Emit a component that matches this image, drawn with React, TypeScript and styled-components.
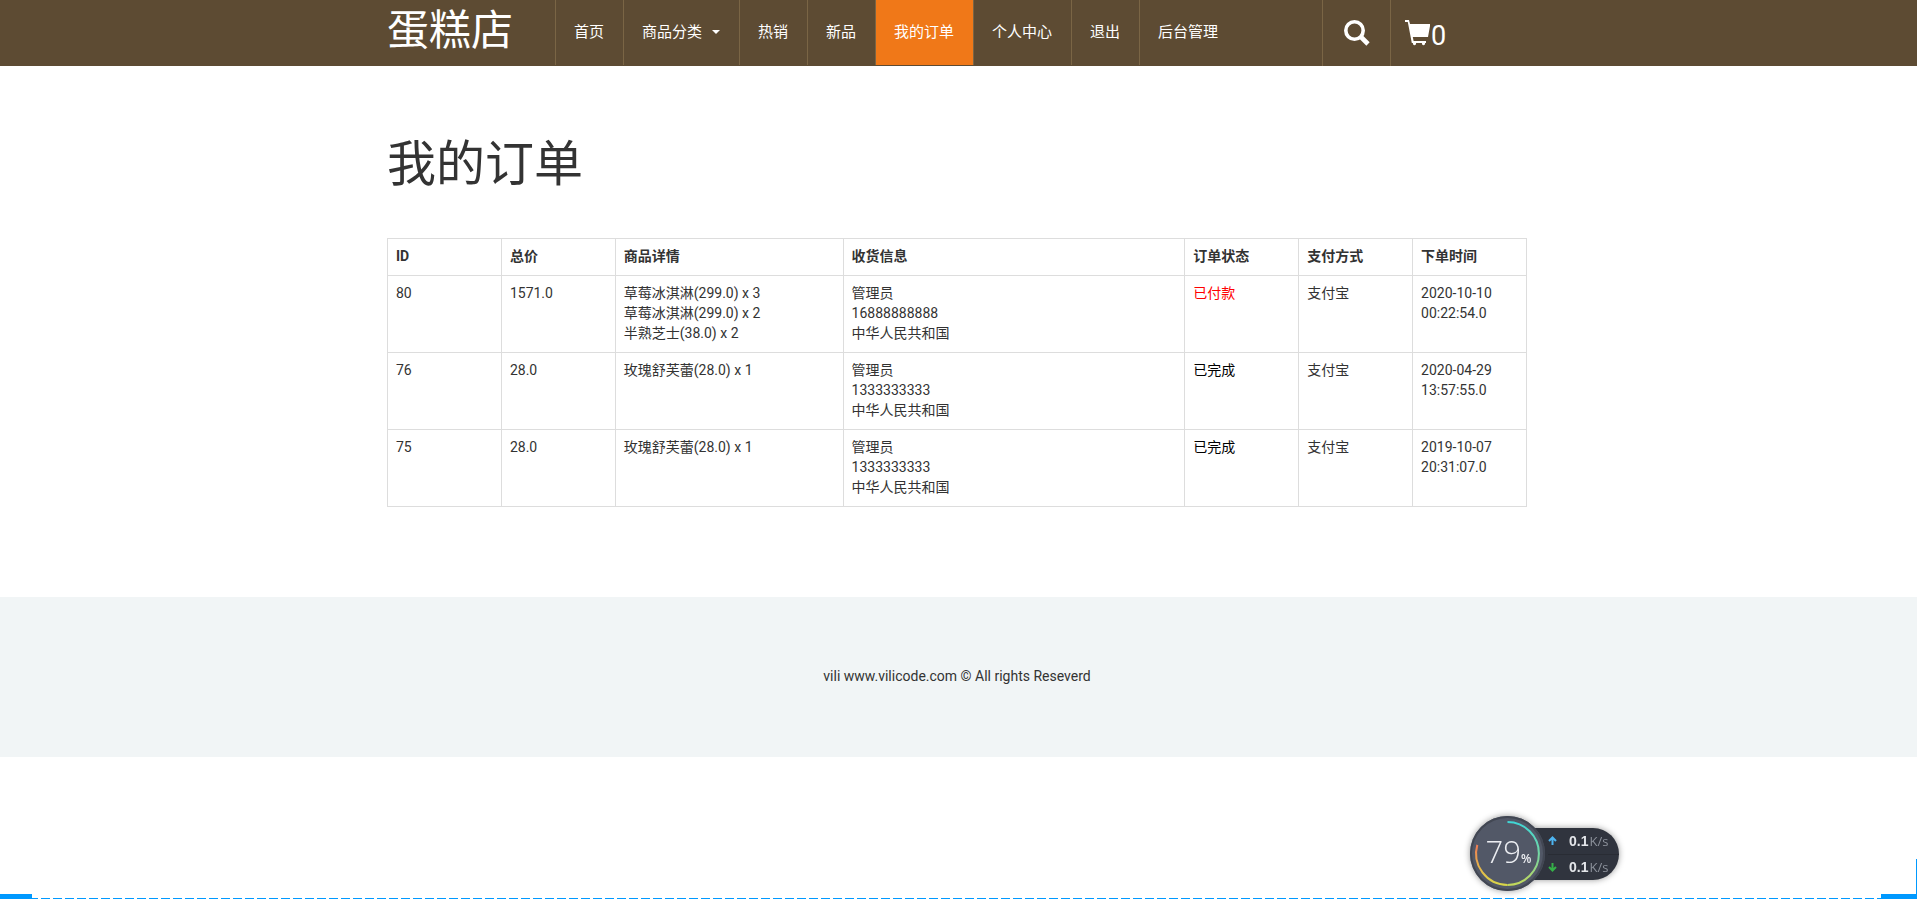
import React from "react";
import styled, { createGlobalStyle } from "styled-components";

const GlobalStyle = createGlobalStyle`
  *, *::before, *::after { box-sizing: border-box; }
  body {
    margin: 0;
    background: #fff;
    color: #333;
    font: 14px/20px Roboto, "Noto Sans CJK SC", sans-serif;
  }
  a { color: inherit; text-decoration: none; }
`;

const Container = styled.div`
  max-width: 1140px;
  margin: 0 auto;
`;

const Header = styled.header`
  padding-right: 3px;
  background: #5d4b33;
  color: #fff;
`;

const HeaderRow = styled(Container)`
  display: flex;
  height: 66px;
`;

const Brand = styled.a`
  flex: 0 0 168px;
  font-size: 42px;
  line-height: 62px;
`;

const Nav = styled.nav`
  display: flex;
  padding-bottom: 1px;
`;

const NavLink = styled.a<{ $active?: boolean }>`
  display: flex;
  align-items: center;
  gap: 10px;
  padding: 0 19px 1px 18px;
  border-left: 1px solid #7a6545;
  background: ${(p) => (p.$active ? "#f07818" : "transparent")};
  font-size: 15px;
  white-space: nowrap;
`;

const Caret = styled.span`
  border: 4px solid transparent;
  border-top-color: #fff;
  border-bottom: 0;
`;

const Actions = styled.div`
  display: flex;
  margin-left: auto;
`;

const SearchButton = styled.button`
  width: 68px;
  padding: 0 0 0 21px;
  border: 0;
  border-left: 1px solid #7a6545;
  background: none;
  color: #fff;
  cursor: pointer;
  text-align: left;
  svg { display: block; }
`;

const CartLink = styled.a`
  display: flex;
  align-items: center;
  width: 137px;
  padding-left: 14px;
  border-left: 1px solid #7a6545;
  font-size: 27px;
  line-height: 28px;
  span { padding-top: 6px; }
`;

const Main = styled.main`
  padding: 67px 3px 90px 0;
`;

const Title = styled.h1`
  margin: 0 0 41px;
  font-size: 49px;
  line-height: 64px;
  font-weight: 400;
`;

const OrderTable = styled.table`
  width: 100%;
  table-layout: fixed;
  border-collapse: collapse;
  th, td {
    padding: 7px 8px 9px;
    border: 1px solid #ddd;
    text-align: left;
    vertical-align: top;
  }
  th { font-weight: 700; }
`;

const Line = styled.div``;

const Status = styled.span<{ $paid: boolean }>`
  color: ${(p) => (p.$paid ? "#f00" : "#000")};
`;

const Footer = styled.footer`
  padding: 69px 3px 71px 0;
  background: #f1f5f6;
  text-align: center;
`;

const SpeedWidget = styled.aside`
  position: fixed;
  right: 298px;
  bottom: 9px;
  display: flex;
  align-items: center;
  filter: drop-shadow(0 0 3px rgba(0, 0, 0, 0.4));
`;

const Dial = styled.div`
  position: relative;
  z-index: 1;
  display: flex;
  align-items: center;
  justify-content: center;
  width: 75px;
  height: 75px;
  border-radius: 50%;
  background: #525867;
  box-shadow: inset 0 0 0 2px #424753;
  svg { position: absolute; inset: 0; }
`;

const DialValue = styled.div`
  padding: 2px 0 0 2px;
  color: #eceef2;
  font: 300 31px/40px "Open Sans", sans-serif;
  small { font-size: 12px; font-weight: 600; }
`;

const Speeds = styled.div`
  width: 98px;
  margin-left: -24px;
  padding-left: 27px;
  border-radius: 0 26px 26px 0;
  background: #30343e;
`;

const Speed = styled.div`
  display: flex;
  align-items: center;
  height: 26px;
  gap: 12px;
  color: #8c919b;
  font: 13px/26px "Open Sans", sans-serif;
  & + & { border-top: 1px solid #292c34; }
  b { margin-right: 1px; color: #e4e6ea; font: 700 14px/26px "Liberation Sans", sans-serif; }
`;

const Frame = styled.div`
  position: fixed;
  left: 0;
  right: 0;
  bottom: 1px;
  display: flex;
  align-items: flex-end;
  height: 40px;
  border-right: 1px solid #0099ff;
  pointer-events: none;
`;

const FrameCorner = styled.div<{ $width: number }>`
  width: ${(p) => p.$width}px;
  height: 5px;
  background: #0099ff;
`;

const FrameDashes = styled.div`
  flex: 1;
  height: 1px;
  background: repeating-linear-gradient(90deg, #0099ff 0 6px, transparent 6px 9px, #0099ff 9px 12px);
`;

const links = [
  { label: "首页" },
  { label: "商品分类", menu: true },
  { label: "热销" },
  { label: "新品" },
  { label: "我的订单", active: true },
  { label: "个人中心" },
  { label: "退出" },
  { label: "后台管理" },
];

const columns = [
  { label: "ID", width: "10%" },
  { label: "总价", width: "10%" },
  { label: "商品详情", width: "20%" },
  { label: "收货信息", width: "30%" },
  { label: "订单状态", width: "10%" },
  { label: "支付方式", width: "10%" },
  { label: "下单时间", width: "10%" },
];

const orders = [
  {
    id: 80,
    total: "1571.0",
    items: ["草莓冰淇淋(299.0) x 3", "草莓冰淇淋(299.0) x 2", "半熟芝士(38.0) x 2"],
    phone: "16888888888",
    paid: true,
    status: "已付款",
    time: "2020-10-10 00:22:54.0",
  },
  {
    id: 76,
    total: "28.0",
    items: ["玫瑰舒芙蕾(28.0) x 1"],
    phone: "1333333333",
    paid: false,
    status: "已完成",
    time: "2020-04-29 13:57:55.0",
  },
  {
    id: 75,
    total: "28.0",
    items: ["玫瑰舒芙蕾(28.0) x 1"],
    phone: "1333333333",
    paid: false,
    status: "已完成",
    time: "2019-10-07 20:31:07.0",
  },
];

const SearchIcon = () => (
  <svg width="26" height="26" viewBox="0 0 26 26" fill="none" stroke="currentColor" aria-hidden="true">
    <circle cx="10.5" cy="10.5" r="8.7" strokeWidth="3.6" />
    <path d="M16.5 16.5 24 24" strokeWidth="4.6" />
  </svg>
);

const CartIcon = () => (
  <svg width="26" height="26" viewBox="0 0 26 26" fill="currentColor" aria-hidden="true">
    <path d="M0 0h4l1 4h20v2l-2 11H7.800l.8 4H21v2h-1a1.600 1.600 0 1 1-3 0h-6a1.600 1.600 0 1 1-3 0H6.800L2.800 2H0z" />
  </svg>
);

const Arrow = ({ color, down }: { color: string; down?: boolean }) => (
  <svg width="9" height="9" viewBox="0 0 9 9" fill="none" stroke={color} strokeWidth="2" aria-hidden="true">
    <path d={down ? "M4.500 0v7.500M1 4l3.500 3.500L8 4" : "M4.500 9V1.500M1 5l3.500-3.500L8 5"} />
  </svg>
);

const DialRing = () => (
  <svg width="75" height="75" viewBox="0 0 74 74" fill="none" strokeWidth="2" aria-hidden="true">
    <defs>
      <linearGradient id="ringRight" x1="0" y1="0" x2="0" y2="1">
        <stop offset="0" stopColor="#3fd6d6" />
        <stop offset="0.6" stopColor="#7fd69a" />
        <stop offset="1" stopColor="#c3d85a" />
      </linearGradient>
      <linearGradient id="ringLeft" x1="0" y1="0" x2="0" y2="1">
        <stop offset="0" stopColor="#ee7a55" />
        <stop offset="0.5" stopColor="#e8b04a" />
        <stop offset="1" stopColor="#d8d648" />
      </linearGradient>
    </defs>
    <path d="M37 6a31 31 0 0 1 0 62" stroke="url(#ringRight)" />
    <path d="M37 68A31 31 0 0 1 7.200 28.500" stroke="url(#ringLeft)" />
  </svg>
);

export default function App() {
  return (
    <>
      <GlobalStyle />
      <Header>
        <HeaderRow>
          <Brand href="#">蛋糕店</Brand>
          <Nav>
            {links.map((l) => (
              <NavLink key={l.label} href="#" $active={l.active}>
                {l.label}
                {l.menu && <Caret />}
              </NavLink>
            ))}
          </Nav>
          <Actions>
            <SearchButton type="button" aria-label="搜索">
              <SearchIcon />
            </SearchButton>
            <CartLink href="#" aria-label="购物车">
              <CartIcon />
              <span>0</span>
            </CartLink>
          </Actions>
        </HeaderRow>
      </Header>

      <Main>
        <Container>
          <Title>我的订单</Title>
          <OrderTable>
            <colgroup>
              {columns.map((c) => (
                <col key={c.label} width={c.width} />
              ))}
            </colgroup>
            <thead>
              <tr>
                {columns.map((c) => (
                  <th key={c.label} scope="col">{c.label}</th>
                ))}
              </tr>
            </thead>
            <tbody>
              {orders.map((o) => (
                <tr key={o.id}>
                  <td>{o.id}</td>
                  <td>{o.total}</td>
                  <td>
                    {o.items.map((item) => (
                      <Line key={item}>{item}</Line>
                    ))}
                  </td>
                  <td>
                    <Line>管理员</Line>
                    <Line>{o.phone}</Line>
                    <Line>中华人民共和国</Line>
                  </td>
                  <td><Status $paid={o.paid}>{o.status}</Status></td>
                  <td>支付宝</td>
                  <td>{o.time}</td>
                </tr>
              ))}
            </tbody>
          </OrderTable>
        </Container>
      </Main>

      <Footer>vili www.vilicode.com © All rights Reseverd</Footer>

      <SpeedWidget>
        <Dial>
          <DialRing />
          <DialValue>79<small>%</small></DialValue>
        </Dial>
        <Speeds>
          <Speed><Arrow color="#4db4f0" /><span><b>0.1</b>K/s</span></Speed>
          <Speed><Arrow color="#35b048" down /><span><b>0.1</b>K/s</span></Speed>
        </Speeds>
      </SpeedWidget>

      <Frame>
        <FrameCorner $width={32} />
        <FrameDashes />
        <FrameCorner $width={35} />
      </Frame>
    </>
  );
}
